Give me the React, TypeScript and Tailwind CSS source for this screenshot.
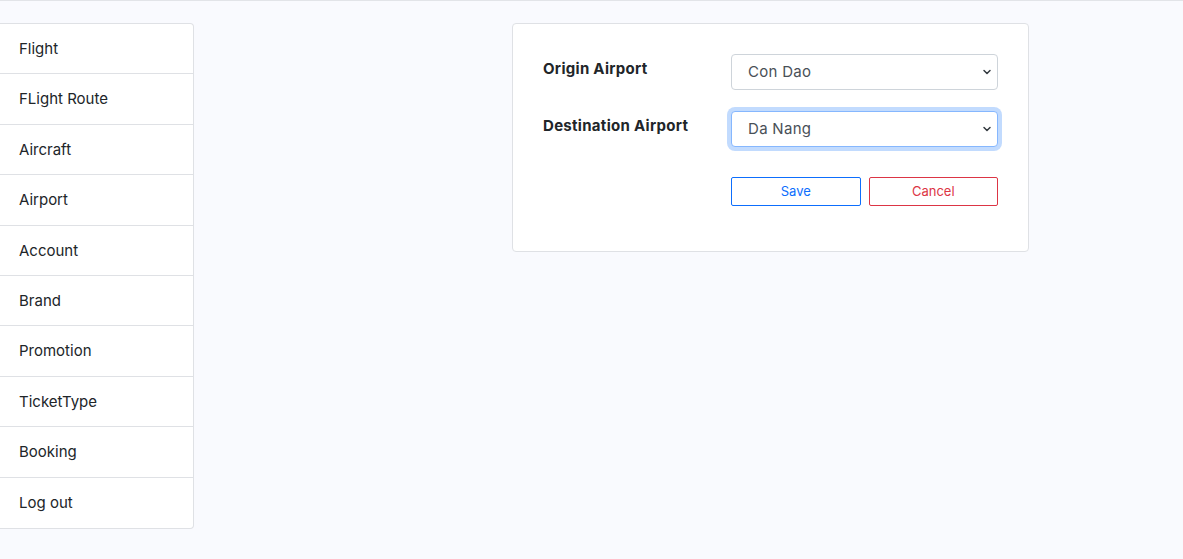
import { ChevronDown } from 'lucide-react'

const menu = ['Flight', 'FLight Route', 'Aircraft', 'Airport', 'Account', 'Brand', 'Promotion', 'TicketType', 'Booking', 'Log out']

function Select({ value, focused }: { value: string; focused?: boolean }) {
  return (
    <div className="relative w-[267px]">
      <select
        defaultValue={value}
        className={
          'w-full h-[36px] appearance-none rounded-[4px] bg-white pl-4 pr-8 text-[15px] tracking-[0.02em] text-[#495057] outline-none ' +
          (focused
            ? 'border border-[#86b7fe] shadow-[0_0_0_4px_rgba(13,110,253,0.25)]'
            : 'border border-[#ced4da]')
        }
      >
        <option>{value}</option>
      </select>
      <ChevronDown className="absolute right-[5px] top-[12px] w-3 h-3 text-[#343a40] pointer-events-none" strokeWidth={3} />
    </div>
  )
}

export default function App() {
  return (
    <div className="min-h-[559px] bg-[#f9fafe] font-['Inter',sans-serif] text-[#212529]">
      <div className="border-t border-[#e2e4e8]" />
      <div className="flex items-start pt-[22px]">
        <ul className="w-[194px] bg-white border border-l-0 border-[#dfe1e5] rounded-r-[4px]">
          {menu.map((m, i) => (
            <li
              key={m}
              className={
                'h-[50.4px] flex items-center pl-[19px] pt-[1px] text-[15px] text-[#212529] ' +
                (i < menu.length - 1 ? 'border-b border-[#dfe1e5]' : '')
              }
            >
              {m}
            </li>
          ))}
        </ul>

        <div className="ml-[318px] w-[517px] h-[229px] bg-white border border-[#dfe1e5] rounded-[4px] px-[30px] pt-[30px]">
          <div className="flex items-start">
            <label className="w-[188px] mt-[4px] text-[15px] font-bold tracking-[0.02em] text-[#212529]">Origin Airport</label>
            <Select value="Con Dao" />
          </div>
          <div className="flex items-start mt-[21px]">
            <label className="w-[188px] mt-[4px] text-[15px] font-bold tracking-[0.02em] text-[#212529]">Destination Airport</label>
            <Select value="Da Nang" focused />
          </div>
          <div className="flex mt-[30px] ml-[188px] gap-[8px]">
            <button className="w-[130px] h-[29px] border border-[#0d6efd] rounded-[2px] text-[13px] text-[#0d6efd] bg-white">Save</button>
            <button className="w-[130px] h-[29px] border border-[#dc3545] rounded-[2px] text-[13px] text-[#dc3545] bg-white">Cancel</button>
          </div>
        </div>
      </div>
    </div>
  )
}
